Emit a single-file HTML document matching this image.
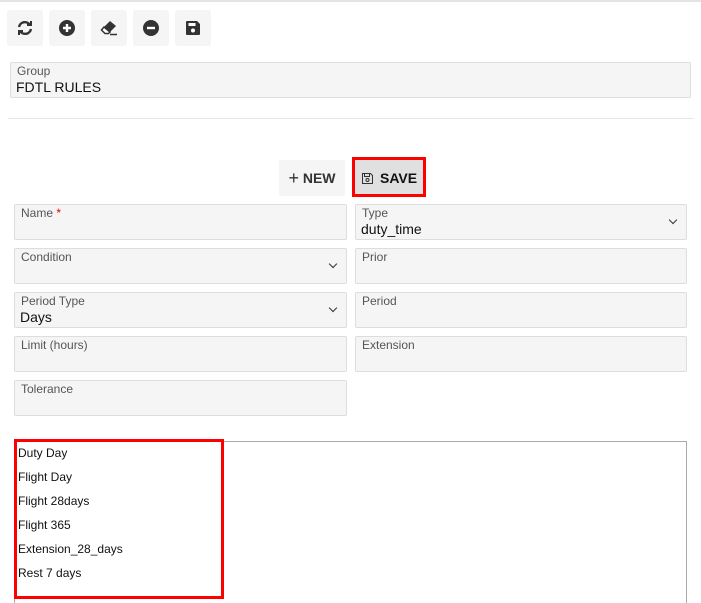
<!DOCTYPE html><html><head><style>
html,body{margin:0;width:701px;height:603px;overflow:hidden}
body{background:#fff;font-family:"Liberation Sans",sans-serif;position:relative}
.a{position:absolute;box-sizing:border-box}
.tb{background:#f5f5f5;border-radius:3px;width:36px;height:36px;top:10px;display:flex;align-items:center;justify-content:center}
.f{background:#f5f5f5;border:1px solid #ddd;border-radius:2px;height:36px;width:333px}
.f .l{position:absolute;left:6px;top:1px;font-size:12px;color:#555}
.f .v{position:absolute;left:5px;top:16px;font-size:14px;color:#111}
.f .c{position:absolute;right:10px;top:12px;width:5px;height:5px;border-right:1.5px solid #333;border-bottom:1.5px solid #333;transform:rotate(45deg)}
.li{position:absolute;left:18px;font-size:12px;color:#111}
</style></head><body>
<div class="a" style="left:0;top:0;width:701px;height:2px;background:#e4e4e4"></div>
<div class="a tb" style="left:7px"><svg width="18" height="18" viewBox="0 0 18 18" fill="none" stroke="#333" stroke-width="2.4"><path d="M3 8a6 6 0 0 1 11-2M15 10a6 6 0 0 1-11 2"/><path d="M15 2v4h-4M3 16v-4h4" stroke-width="2"/></svg></div>
<div class="a tb" style="left:49px"><svg width="16" height="16"><circle cx="8" cy="8" r="8" fill="#333"/><path d="M8 4v8M4 8h8" stroke="#fff" stroke-width="2.4"/></svg></div>
<div class="a tb" style="left:91px"><svg width="18" height="16" viewBox="0 0 18 16"><path d="M10 1l6 5-6 6-6-5z" fill="#333"/><path d="M4 7l6 5-1.5 1.5H5L1.5 10z" fill="#fff" stroke="#333" stroke-width="1.5"/><path d="M10 14.5h7" stroke="#333" stroke-width="1.5"/></svg></div>
<div class="a tb" style="left:133px"><svg width="16" height="16"><circle cx="8" cy="8" r="8" fill="#333"/><path d="M4 8h8" stroke="#fff" stroke-width="2.4"/></svg></div>
<div class="a tb" style="left:175px"><svg width="14" height="14"><path d="M0 1a1 1 0 0 1 1-1h10l3 3v10a1 1 0 0 1-1 1H1a1 1 0 0 1-1-1z" fill="#333"/><rect x="2.5" y="2" width="7" height="3" fill="#fff"/><circle cx="7" cy="9.5" r="2" fill="#fff"/></svg></div>
<div class="a" style="left:10px;top:62px;width:681px;height:36px;background:#f5f5f5;border:1px solid #ddd;border-radius:2px"><div style="position:absolute;left:6px;top:1px;font-size:12px;color:#555">Group</div><div style="position:absolute;left:5px;top:16px;font-size:14px;color:#111">FDTL RULES</div></div>
<div class="a" style="left:8px;top:118px;width:686px;height:1px;background:#e6e6e6"></div>
<div class="a" style="left:279px;top:160px;width:66px;height:36px;background:#f5f5f5;border-radius:2px;font-size:14px;font-weight:bold;color:#333;line-height:36px;text-align:center"><span style="font-weight:normal;font-size:18px;vertical-align:top">+</span> NEW</div>
<div class="a" style="left:352px;top:157px;width:74px;height:40px;border:3px solid #f00;background:#e0e0e0;font-size:14px;font-weight:bold;color:#111;line-height:36px;padding-left:25px">SAVE<svg style="position:absolute;left:7px;top:13px" width="11" height="11"><path d="M.5.5h8l2 2v8h-10z M2.5.5v3h5v-3" fill="none" stroke="#333"/><circle cx="5.5" cy="7" r="1.5" fill="none" stroke="#333"/></svg></div>
<div class="a f" style="left:14px;top:204px"><div class="l">Name <span style="color:#e00">*</span></div></div>
<div class="a f" style="left:355px;top:204px;width:332px"><div class="l">Type</div><div class="v">duty_time</div><div class="c"></div></div>
<div class="a f" style="left:14px;top:248px"><div class="l">Condition</div><div class="c"></div></div>
<div class="a f" style="left:355px;top:248px;width:332px"><div class="l">Prior</div></div>
<div class="a f" style="left:14px;top:292px"><div class="l">Period Type</div><div class="v">Days</div><div class="c"></div></div>
<div class="a f" style="left:355px;top:292px;width:332px"><div class="l">Period</div></div>
<div class="a f" style="left:14px;top:336px"><div class="l">Limit (hours)</div></div>
<div class="a f" style="left:355px;top:336px;width:332px"><div class="l">Extension</div></div>
<div class="a f" style="left:14px;top:380px"><div class="l">Tolerance</div></div>
<div class="a" style="left:14px;top:441px;width:673px;height:162px;border:1px solid #aaa;border-bottom:none"></div>
<div class="a" style="left:14px;top:439px;width:210px;height:160px;border:3px solid #f00"></div>
<div class="li" style="top:446px">Duty Day</div>
<div class="li" style="top:470px">Flight Day</div>
<div class="li" style="top:494px">Flight 28days</div>
<div class="li" style="top:518px">Flight 365</div>
<div class="li" style="top:542px">Extension_28_days</div>
<div class="li" style="top:566px">Rest 7 days</div>
</body></html>
